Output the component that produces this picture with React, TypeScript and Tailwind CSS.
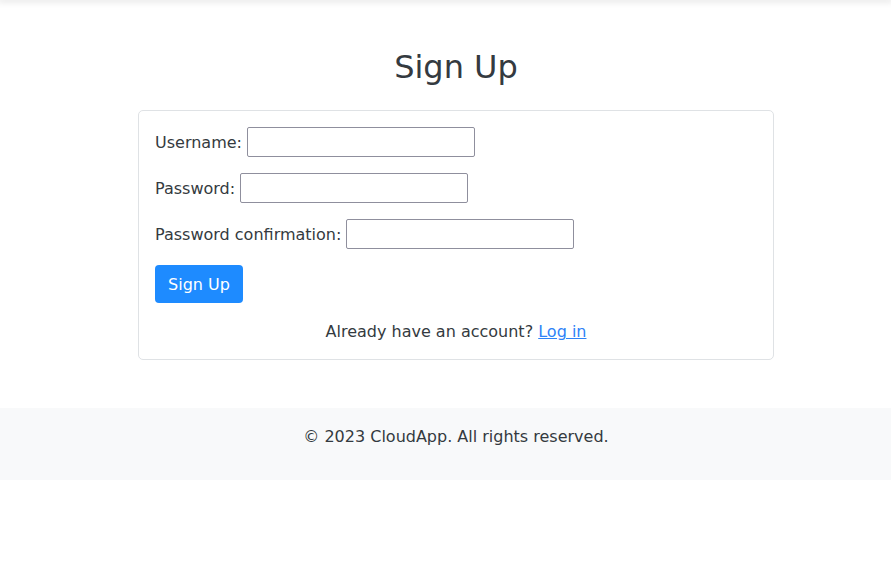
const Field = ({ label, type }: { label: string; type: string }) => (
  <div className="mb-4 flex items-center">
    <label className="mt-[2px] mr-[5px]">{label}</label>
    <input
      type={type}
      className="h-[30px] w-[228px] rounded-[2px] border border-[#8f8f9d] bg-white px-1 outline-none"
    />
  </div>
);

export default function App() {
  return (
    <div
      className="min-h-screen bg-white text-base leading-6 text-[#343a40]"
      style={{ fontFamily: '"DejaVu Sans", sans-serif' }}
    >
      {/* top bar shadow */}
      <div className="h-0 shadow-[0_0_6px_2px_rgba(0,0,0,0.12)]" />

      <div className="pt-12">
        <div className="ml-[138px] w-[636px]">
          <h2 className="mb-6 text-center text-[32px] leading-[38px] font-normal text-[#343a40]">
            Sign Up
          </h2>

          <div className="rounded-[5px] border border-[#dfe2e5] px-4 pt-4 pb-[15px]">
            <Field label="Username:" type="text" />
            <Field label="Password:" type="password" />
            <Field label="Password confirmation:" type="password" />

            <button className="mb-[17px] h-[38px] w-[88px] rounded-[4px] bg-[#1e8bff] pt-[2px] text-white">
              Sign Up
            </button>

            <p className="text-center">
              Already have an account?{" "}
              <a href="#" className="text-[#2f82f7] underline">
                Log in
              </a>
            </p>
          </div>
        </div>
      </div>

      <footer className="mt-12 bg-[#f8f9fa] pt-[17px] pb-4">
        <p className="mb-[15px] ml-[138px] w-[636px] text-center">
          © 2023 CloudApp. All rights reserved.
        </p>
      </footer>
    </div>
  );
}
